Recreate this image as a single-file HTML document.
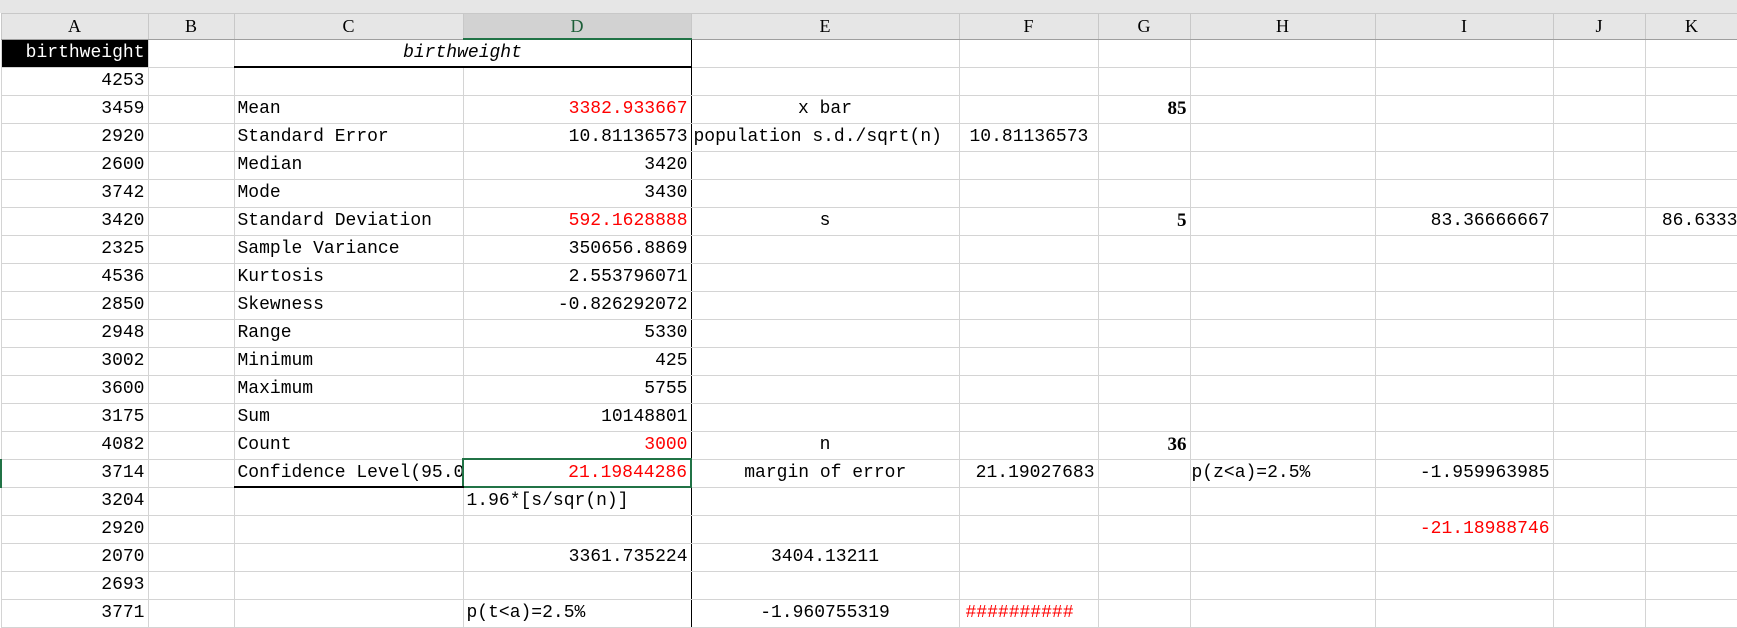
<!DOCTYPE html>
<html><head><meta charset="utf-8"><style>
*{margin:0;padding:0;box-sizing:border-box}
body{width:1737px;height:628px;overflow:hidden;background:#fff;position:relative;font-family:"Liberation Mono","Noto Sans CJK SC",monospace;font-size:18px;color:#000}
.band{position:absolute;left:0;top:0;width:1737px;height:13px;background:#e6e6e6}
table{position:absolute;left:0;top:13px;border-collapse:collapse;table-layout:fixed;width:1737px}
td{height:28px;border:1px solid #d4d4d4;white-space:nowrap;overflow:hidden;padding:0 3px;line-height:26px}
tr.h td{height:25px;background:#e6e6e6;border-color:#c8c8c8;border-bottom:1px solid #9e9e9e;text-align:center;font-family:"Liberation Serif",serif;font-size:18px;line-height:24px}
tr.h td.sel{background:#d2d2d2;border-bottom:2px solid #217346;color:#1d5e38}
.r{text-align:right}.c{text-align:center}.red{color:#f00}
.b{font-family:"Liberation Serif",serif;font-weight:bold;font-size:19px}
.dr{border-right:1px solid #000}
tr.t td{height:27px}
</style></head><body>
<div class="band"></div>
<table>
<colgroup><col style="width:147px"><col style="width:86px"><col style="width:229px"><col style="width:228px"><col style="width:268px"><col style="width:139px"><col style="width:92px"><col style="width:185px"><col style="width:178px"><col style="width:92px"><col style="width:93px"></colgroup>
<tr class="h"><td>A</td><td>B</td><td>C</td><td class="sel">D</td><td>E</td><td>F</td><td>G</td><td>H</td><td>I</td><td>J</td><td>K</td></tr>
<tr class="t"><td class="r" style="background:#000;color:#fff">birthweight</td><td></td><td colspan="2" class="c dr" style="font-style:italic;border-bottom:2px solid #000;border-top:1px solid #000">birthweight</td><td></td><td></td><td></td><td></td><td></td><td></td><td></td></tr>
<tr><td class="r">4253</td><td></td><td></td><td class="dr"></td><td></td><td></td><td></td><td></td><td></td><td></td><td></td></tr>
<tr><td class="r">3459</td><td></td><td>Mean</td><td class="r red dr">3382.933667</td><td class="c">x bar</td><td></td><td class="r b">85</td><td></td><td></td><td></td><td></td></tr>
<tr><td class="r">2920</td><td></td><td>Standard Error</td><td class="r dr">10.81136573</td><td style="padding:0 2px">population s.d./sqrt(n)</td><td style="padding-left:10px">10.81136573</td><td></td><td></td><td></td><td></td><td></td></tr>
<tr><td class="r">2600</td><td></td><td>Median</td><td class="r dr">3420</td><td></td><td></td><td></td><td></td><td></td><td></td><td></td></tr>
<tr><td class="r">3742</td><td></td><td>Mode</td><td class="r dr">3430</td><td></td><td></td><td></td><td></td><td></td><td></td><td></td></tr>
<tr><td class="r">3420</td><td></td><td>Standard Deviation</td><td class="r red dr">592.1628888</td><td class="c">s</td><td></td><td class="r b">5</td><td></td><td class="r">83.36666667</td><td></td><td class="r" style="padding:0">86.6333</td></tr>
<tr><td class="r">2325</td><td></td><td>Sample Variance</td><td class="r dr">350656.8869</td><td></td><td></td><td></td><td></td><td></td><td></td><td></td></tr>
<tr><td class="r">4536</td><td></td><td>Kurtosis</td><td class="r dr">2.553796071</td><td></td><td></td><td></td><td></td><td></td><td></td><td></td></tr>
<tr><td class="r">2850</td><td></td><td>Skewness</td><td class="r dr">-0.826292072</td><td></td><td></td><td></td><td></td><td></td><td></td><td></td></tr>
<tr><td class="r">2948</td><td></td><td>Range</td><td class="r dr">5330</td><td></td><td></td><td></td><td></td><td></td><td></td><td></td></tr>
<tr><td class="r">3002</td><td></td><td>Minimum</td><td class="r dr">425</td><td></td><td></td><td></td><td></td><td></td><td></td><td></td></tr>
<tr><td class="r">3600</td><td></td><td>Maximum</td><td class="r dr">5755</td><td></td><td></td><td></td><td></td><td></td><td></td><td></td></tr>
<tr><td class="r">3175</td><td></td><td>Sum</td><td class="r dr">10148801</td><td></td><td></td><td></td><td></td><td></td><td></td><td></td></tr>
<tr><td class="r">4082</td><td></td><td>Count</td><td class="r red dr">3000</td><td class="c">n</td><td></td><td class="r b">36</td><td></td><td></td><td></td><td></td></tr>
<tr class="t"><td class="r" style="border-left:2px solid #217346">3714</td><td></td><td style="border-bottom:2px solid #000">Confidence Level(95.0%)</td><td class="r red" style="border:2px solid #217346">21.19844286</td><td class="c">margin of error</td><td class="r">21.19027683</td><td></td><td style="padding:0 1px">p(z&lt;a)=2.5%</td><td class="r">-1.959963985</td><td></td><td></td></tr>
<tr><td class="r">3204</td><td></td><td></td><td class="dr">1.96*[s/sqr(n)]</td><td></td><td></td><td></td><td></td><td></td><td></td><td></td></tr>
<tr><td class="r">2920</td><td></td><td></td><td class="dr"></td><td></td><td></td><td></td><td></td><td class="r red">-21.18988746</td><td></td><td></td></tr>
<tr><td class="r">2070</td><td></td><td></td><td class="r dr">3361.735224</td><td class="c">3404.13211</td><td></td><td></td><td></td><td></td><td></td><td></td></tr>
<tr><td class="r">2693</td><td></td><td></td><td class="dr"></td><td></td><td></td><td></td><td></td><td></td><td></td><td></td></tr>
<tr><td class="r">3771</td><td></td><td></td><td class="dr">p(t&lt;a)=2.5%</td><td class="c">-1.960755319</td><td class="red" style="padding-left:6px">##########</td><td></td><td></td><td></td><td></td><td></td></tr>
</table>
</body></html>
